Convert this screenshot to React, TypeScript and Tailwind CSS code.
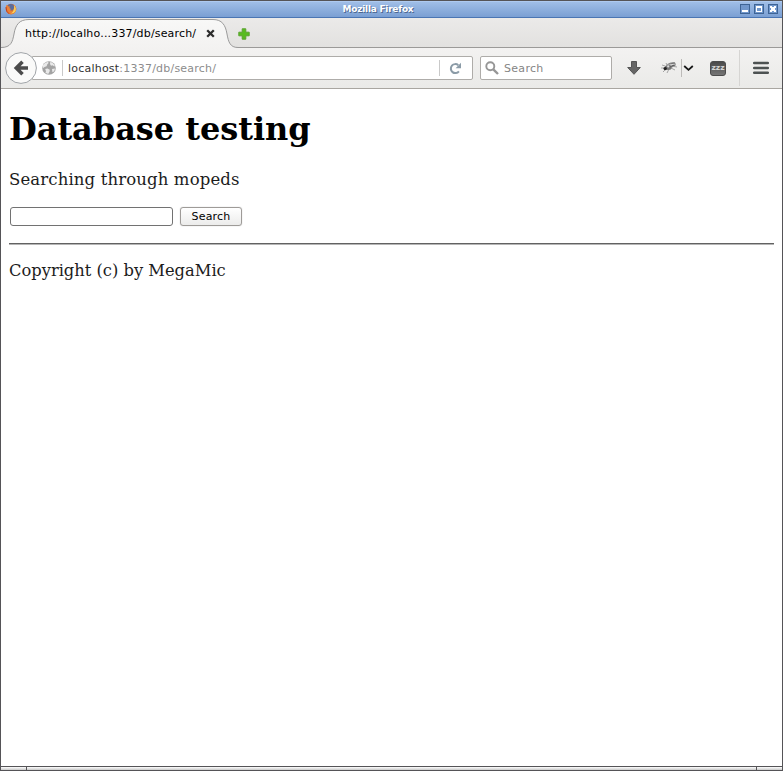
import React from "react";

const ui = "font-['DejaVu_Sans',sans-serif]";

function FirefoxLogo() {
  return (
    <svg width="12" height="12" viewBox="0 0 12 12">
      <circle cx="6" cy="6" r="5.3" fill="#d9702f" />
      <circle cx="5.8" cy="4.3" r="3.2" fill="#5b6c9c" />
      <path d="M1.2 2 L3 3.2 L5 3.4 L4.3 5 L6 6 L5 7.3 L7.5 8.2 L9.5 6.5 L9.8 3 L11.4 6 L9.6 10 L6 11.5 L2.3 10 L0.7 6Z" fill="#ea8136" />
      <path d="M9 1.8 Q11.6 5 10.7 8 Q9 10.7 6 10.6 Q9.7 8 9 1.8Z" fill="#f7cf5c" />
      <path d="M1 4 Q1 9 4 10.7" stroke="#b9412c" fill="none" />
    </svg>
  );
}

function TitleBar() {
  return (
    <div className="flex h-[17px] items-center justify-between border-b border-[#4a75b3] bg-gradient-to-b from-[#a2c0e8] to-[#7a9fd3] pl-1 pr-1 shadow-[inset_0_1px_0_#aecaf0]">
      <div className="w-[64px]"><FirefoxLogo /></div>
      <span className="mr-[27px] text-[9px] leading-4 font-bold tracking-[-0.25px] text-white [text-shadow:1px_1px_0_#4c6791]">Mozilla Firefox</span>
      <div className="flex w-[64px] justify-end gap-1">
        {[0, 1, 2].map((n) => (
          <svg key={n} width="10" height="10" viewBox="0 0 10 10" shapeRendering="crispEdges">
            <rect x=".5" y=".5" width="9" height="9" fill="#7197cc" stroke="#3e6495" />
            {n === 0 && <path d="M2 7H8" stroke="#fff" strokeWidth="2" />}
            {n === 1 && <path d="M2 2H8V8H2ZM3 4V7H7V4Z" fill="#fff" fillRule="evenodd" />}
            {n === 2 && <path d="M2 2H4V3H6V2H8V4H7V6H8V8H6V7H4V8H2V6H3V4H2Z" fill="#fff" />}
          </svg>
        ))}
      </div>
    </div>
  );
}

function TabStrip() {
  return (
    <div className="flex h-[30px] bg-gradient-to-b from-[#ebeae9] to-[#e2e1df] shadow-[inset_0_-1px_0_#9b9a98]">
      <div className="grid w-[237px]">
        <svg className="col-start-1 row-start-1" width="237" height="30" viewBox="0 0 237 30">
          <defs>
            <linearGradient id="tab" x2="0" y2="1"><stop stopColor="#f8f8f7" /><stop offset="1" stopColor="#f3f2f1" /></linearGradient>
          </defs>
          <path d="M0 29.5C10 29.5 11.5 24 13 16C14.5 7 18 1.5 28 1.5H212C221 1.5 224.5 7 226 16C227.5 24 229 29.5 237 29.5V30H0Z" fill="url(#tab)" />
          <path d="M0 29.5C10 29.5 11.5 24 13 16C14.5 7 18 1.5 28 1.5H212C221 1.5 224.5 7 226 16C227.5 24 229 29.5 237 29.5" fill="none" stroke="#9b9b9b" />
        </svg>
        <div className="col-start-1 row-start-1 flex items-center pt-px pl-6 text-[11px] text-black">
          <span className="w-[181px] pt-[2px] tracking-[0.17px] whitespace-nowrap">http://localho...337/db/search/</span>
          <svg width="9" height="9" viewBox="0 0 9 9"><path d="M1.2 1.2 7.8 7.8M7.8 1.2 1.2 7.8" stroke="#2c2c2c" strokeWidth="2.3" /></svg>
        </div>
      </div>
      <svg className="mt-[10px]" width="12" height="12" viewBox="0 0 12 12"><path d="M4.2 .8H7.8V4.2H11.2V7.8H7.8V11.2H4.2V7.8H.8V4.2H4.2Z" fill="#58bb20" stroke="#5aa32f" strokeLinejoin="round" /></svg>
    </div>
  );
}

function Globe() {
  return (
    <svg width="14" height="14" viewBox="0 0 14 14">
      <circle cx="7" cy="7" r="6.8" fill="#a3a3a3" />
      <path d="M1 4 3 2 6 .8 6.6 2 5.2 3.6 4.6 5.2 2.5 6 .8 7.2ZM8.2 1 10.2 1.4 12.7 4 12.3 5.4 10.5 4.2 9 4.8 8 3ZM3.2 8 5.5 7.4 7.8 8.8 7.5 10.8 6.2 13 3.4 11.8 4 10.2ZM10 8 13 7.6 12.2 10.2 10.4 11.2Z" fill="#e9e9e9" />
    </svg>
  );
}

function NavBar() {
  return (
    <div className="flex h-[41px] items-center border-b border-[#a9a6a1] bg-gradient-to-b from-[#f3f2f1] to-[#eaeae8] pl-1">
      <svg className="z-10 shrink-0" width="32" height="32" viewBox="0 0 32 32">
        <circle cx="16" cy="16" r="15.4" fill="#fafaf9" stroke="#a0a4a8" />
        <path d="M23 16H12.5M17.5 9.8 11.3 16 17.5 22.2" fill="none" stroke="#4c4c4c" strokeWidth="3.6" />
      </svg>
      <div className="-ml-[5px] flex h-6 w-[441px] items-center rounded-r-[2px] border border-[#aeaca9] bg-white pl-[9px] text-[11px] text-[#8c8c8c]">
        <Globe />
        <div className="ml-[6px] h-4 w-px bg-[#c9c9c9]" />
        <span className="ml-[5px] flex-1 pt-[2px] tracking-[0.22px]"><span className="text-[#333]">localhost</span>:1337/db/search/</span>
        <div className="mr-[9px] h-4 w-px bg-[#c9c9c9]" />
        <svg className="mr-[10px]" width="13" height="13" viewBox="0 0 13 13"><path d="M9.9 9.4A4.5 4.5 0 1 1 9.3 3.2" fill="none" stroke="#8b9ba7" strokeWidth="2" /><path d="M12 .8V6.2H6.6Z" fill="#8b9ba7" /></svg>
      </div>
      <div className="ml-[7px] flex h-6 w-[132px] items-center rounded-[2px] border border-[#aeaca9] bg-white pl-1 text-[11px] text-[#858585]">
        <svg width="14" height="14" viewBox="0 0 14 14" fill="none" stroke="#969696"><circle cx="5.3" cy="5.3" r="4" strokeWidth="1.9" /><path d="M8.3 8.3 13 13" strokeWidth="2.4" /></svg>
        <span className="ml-[5px] pt-[2px] tracking-[0.3px]">Search</span>
      </div>
      <svg className="ml-[15px]" width="14" height="14" viewBox="0 0 14 14"><path d="M4.5.5H9.5V6.5H13.3L7 13.3.7 6.5H4.5Z" fill="#666" stroke="#555" /></svg>
      <svg className="ml-[20px]" width="17" height="14" viewBox="0 0 17 14">
        <path d="M4 5 1 4M6 4 5 2M5 8 2 11M8 8 6 12M10 7 14 9M10 5 16 6M4 7 0 7" stroke="#a5a5a5" />
        <ellipse cx="10.3" cy="4" rx="4.7" ry="2.6" transform="rotate(-16 10.3 4)" fill="#999" />
        <ellipse cx="11" cy="3.3" rx="3" ry="1.2" fill="#d8d8d8" />
        <ellipse cx="7.2" cy="6.5" rx="3.5" ry="2.5" fill="#777" />
        <circle cx="7.2" cy="5.4" r="1.1" fill="#ddd" />
        <circle cx="4.2" cy="7.6" r="1.7" fill="#222" />
        <path d="M8 3 14 2M9 6 13 4M11 5 14 4" stroke="#555" strokeWidth=".8" />
      </svg>
      <div className="ml-[3px] h-[18px] w-px bg-[#bcbab8]" />
      <svg className="ml-px" width="11" height="7" viewBox="0 0 11 7"><path d="M1.2 1 5.5 4.9 9.8 1" fill="none" stroke="#161616" strokeWidth="1.8" /></svg>
      <svg className="ml-[16px]" width="16" height="15" viewBox="0 0 16 15">
        <defs>
          <linearGradient id="badge" x2="0" y2="1"><stop stopColor="#484848" /><stop offset="1" stopColor="#777" /></linearGradient>
        </defs>
        <rect x=".5" y=".5" width="15" height="14" rx="2.5" fill="url(#badge)" stroke="#4c4c4c" />
        <text x="8" y="9" textAnchor="middle" fill="#d6d6d6" fontSize="7.5" fontFamily="DejaVu Sans" fontWeight="bold">zzz</text>
      </svg>
      <div className="ml-[13px] h-9 w-px bg-[#d6d5d3]" />
      <svg className="ml-[13px]" width="16" height="14" viewBox="0 0 16 14"><path d="M1.2 2H14.8M1.2 7H14.8M1.2 11.7H14.8" stroke="#4d5252" strokeWidth="2.5" strokeLinecap="round" /></svg>
    </div>
  );
}

export default function App() {
  return (
    <div className={`${ui} flex h-[771px] w-[783px] flex-col overflow-hidden border border-[#555457] bg-white`}>
      <TitleBar />
      <TabStrip />
      <NavBar />
      <main className="flex-1 px-2 font-['DejaVu_Serif',serif] text-base text-[#1c1c1c]">
        <h1 className="mt-[21px] text-[32px] leading-[38px] font-bold tracking-[-0.05px] text-black">Database testing</h1>
        <p className="mt-[22px] text-[16.5px] leading-[19px] tracking-[0.13px]">Searching through mopeds</p>
        <form className={`${ui} mt-[18px] flex h-5 gap-[7px] pl-px`} onSubmit={(e) => e.preventDefault()}>
          <input className="h-[19px] w-[163px] rounded-[3px] border border-[#727272] bg-white px-1 text-[11px] outline-none" />
          <button className="h-[19px] w-[62px] rounded-[3px] border border-[#9e9b98] bg-gradient-to-b from-white to-[#ececeb] text-[11px] leading-[17px] tracking-[0.2px] text-black shadow-[0_0_1px_#aaa]">Search</button>
        </form>
        <hr className="mt-4 h-[2px] w-[765px] border-t border-b border-t-[#626262] border-b-[#b5b5b5]" />
        <p className="mt-[16px] text-[16.3px] leading-[19px]">Copyright (c) by MegaMic</p>
      </main>
      <footer className="flex h-1 border-t border-[#555457] bg-gradient-to-b from-white to-[#c8c8c8]">
        <div className="w-[26px] border-r border-[#555457]" />
        <div className="flex-1" />
        <div className="w-[26px] border-l border-[#555457]" />
      </footer>
    </div>
  );
}
